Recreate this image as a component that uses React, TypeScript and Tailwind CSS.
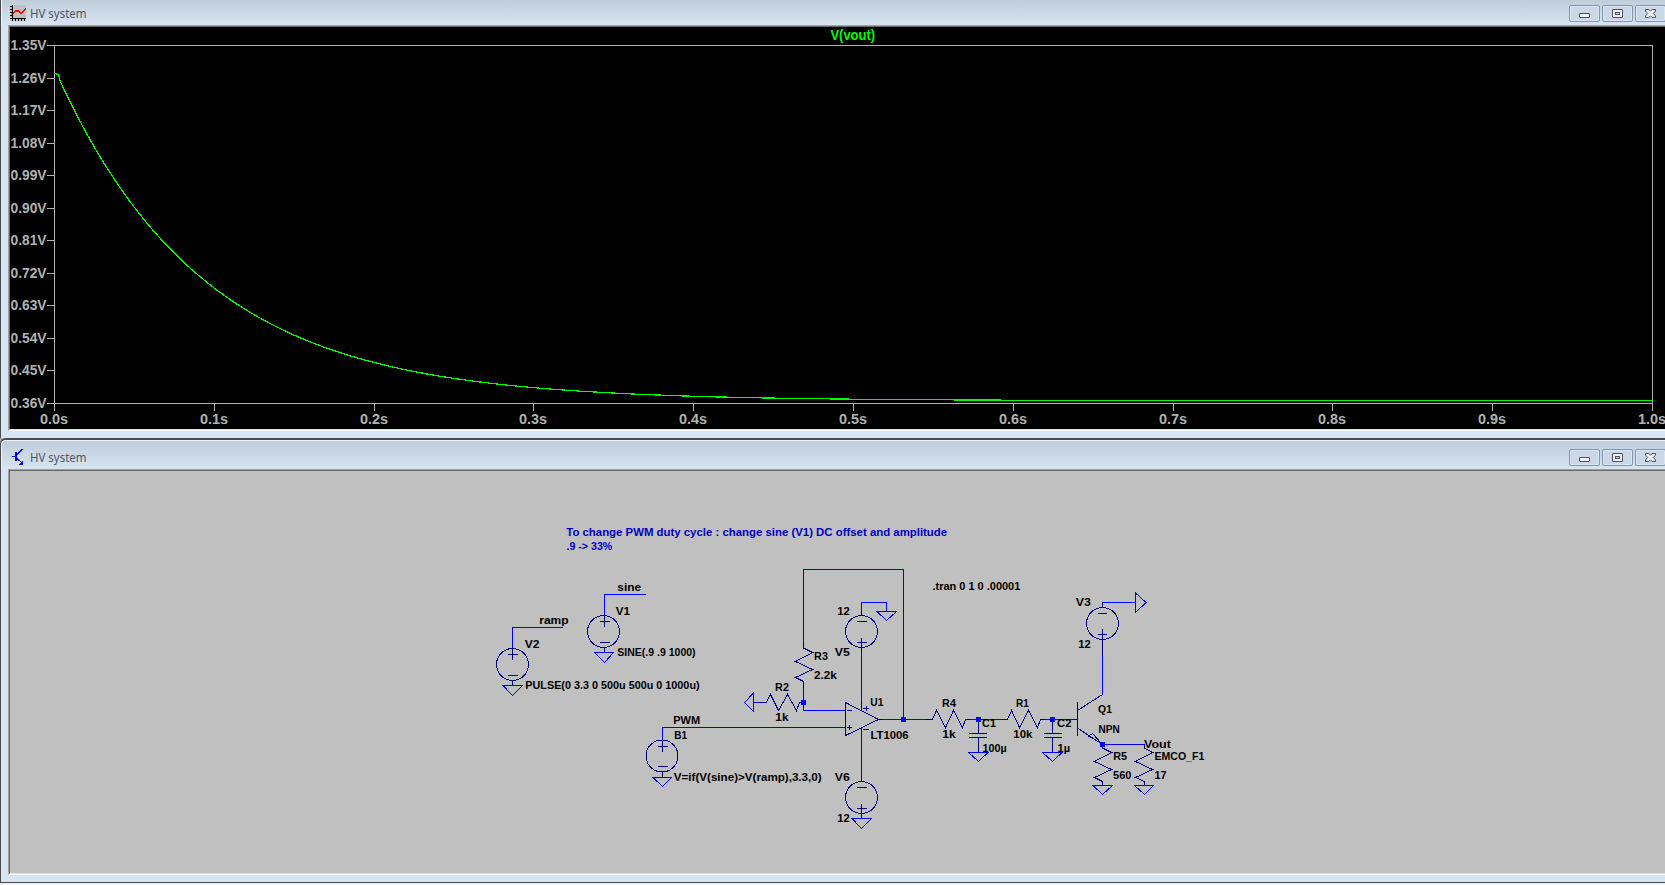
import type { ReactNode } from "react";

const WIRE = "#0000ff";
const PART = "#000080";

function CaptionButtons() {
  const box =
    "flex h-[17px] w-[31px] shrink-0 items-center justify-center rounded-[2px] border border-[#8593b0] bg-[#c9d7e7] shadow-[inset_0_0_0_1px_#dae5f2]";
  return (
    <div className="flex gap-[2px] overflow-hidden pt-[5px]">
      <button className={box} aria-label="Minimize">
        <svg width="31" height="17" viewBox="0 0 31 17" className="shrink-0">
          <rect x="10.5" y="8.5" width="10" height="4" rx="0.5" fill="#f2f2f2" stroke="#4b5066" />
        </svg>
      </button>
      <button className={box} aria-label="Restore">
        <svg width="31" height="17" viewBox="0 0 31 17" className="shrink-0">
          <rect x="10.5" y="4.5" width="10" height="8" rx="0.5" fill="#f2f2f2" stroke="#4b5066" />
          <rect x="13.5" y="7.5" width="4" height="2" fill="#c9d7e7" stroke="#4b5066" />
        </svg>
      </button>
      <button className={box} aria-label="Close">
        <svg width="31" height="17" viewBox="0 0 31 17" className="shrink-0">
          <path
            d="M10.5 4.5h3.4l1.6 1.7 1.6-1.7h3.4v1.6l-2.3 2.4 2.3 2.4v1.6h-3.4l-1.6-1.7-1.6 1.7h-3.4v-1.6l2.3-2.4-2.3-2.4z"
            fill="#f2f2f2"
            stroke="#4b5066"
          />
        </svg>
      </button>
    </div>
  );
}

function PlotIcon() {
  return (
    <svg width="16" height="16" viewBox="0 0 16 16" shapeRendering="crispEdges">
      <rect width="16" height="16" fill="#c0c0c0" />
      <path
        d="M2.5 0V16M0 13.5H16M0 1.5H2M0 4.5H2M0 7.5H2M0 10.5H2M5.5 14V16M8.5 14V16M11.5 14V16M14.5 14V16"
        stroke="#000"
        fill="none"
      />
      <path d="M3 8.5L6 5.5H8L10 7.5H12L16 3.5" stroke="#ff0000" strokeWidth="2" fill="none" />
    </svg>
  );
}

function TransistorIcon() {
  return (
    <svg width="16" height="16" viewBox="-2 0 16 16" shapeRendering="crispEdges">
      <path d="M4 3V12" stroke="#0000ff" strokeWidth="2" />
      <path d="M0 7.5H4M5 5.5L10.5 0M5 9.5L11 15" stroke="#0000ff" fill="none" />
      <path d="M10.5 11.5V15.5H6.5z" fill="#0000ff" />
    </svg>
  );
}

function TitleBar({ icon, title }: { icon: ReactNode; title: string }) {
  return (
    <div className="flex h-[25px] shrink-0 justify-between">
      <div className="flex items-start">
        <div className="pt-[5px] pl-[8px]">{icon}</div>
        <div className="pt-[5px] pl-[4px]">
          <svg width="70" height="18" viewBox="30 0 70 18">
            <text
              x="30"
              y="13"
              fontFamily="'Noto Sans','Open Sans',sans-serif"
              fontSize="12"
              fill="#4c5766"
              textLength="56.5"
              lengthAdjust="spacingAndGlyphs"
            >
              {title}
            </text>
          </svg>
        </div>
      </div>
      <div className="w-[96px] overflow-hidden">
        <CaptionButtons />
      </div>
    </div>
  );
}

const yLabels = ["1.35V", "1.26V", "1.17V", "1.08V", "0.99V", "0.90V", "0.81V", "0.72V", "0.63V", "0.54V", "0.45V", "0.36V"];
const xLabels = ["0.0s", "0.1s", "0.2s", "0.3s", "0.4s", "0.5s", "0.6s", "0.7s", "0.8s", "0.9s", "1.0s"];

const tickY = (i: number) => Math.round(45 + (i * 358) / 11);
const tickX = (i: number) => Math.round(54 + i * 159.8);

// Exponential discharge of V(vout), with the short delay at t = 0
const curve = Array.from({ length: 800 }, (_, i) => {
  const x = 54 + i * 2;
  const y = 400.6 - 332 * Math.exp(-((x - 54) / 1598) / 0.0924);
  return `${x + 0.5},${i < 3 ? 73.5 + i * 0.5 : y.toFixed(1)}`;
}).join(" ");

function Plot() {
  return (
    <svg width="1655" height="402" viewBox="10 27 1655 402" className="block bg-black">
      <g stroke="#b2b2b2" fill="none" shapeRendering="crispEdges">
        <path d="M54.5 45.5H1652.5V403.5H54.5z" />
        {yLabels.map((l, i) => (
          <path key={l} d={`M47 ${tickY(i) + 0.5}H54`} />
        ))}
        {xLabels.map((l, i) => (
          <path key={l} d={`M${tickX(i) + 0.5} 403V411`} />
        ))}
      </g>
      <polyline points={curve} fill="none" stroke="#00ff00" shapeRendering="crispEdges" strokeWidth="1.2" />
      <g fontFamily="'Liberation Sans',Arial,sans-serif" fontWeight="bold" fontSize="14" fill="#b2b2b2">
        {yLabels.map((l, i) => (
          <text key={l} x="10.5" y={tickY(i) + 5} textLength="36" lengthAdjust="spacingAndGlyphs">
            {l}
          </text>
        ))}
        {xLabels.map((l, i) => (
          <text key={l} x={tickX(i) - 14} y="424" textLength="28" lengthAdjust="spacingAndGlyphs">
            {l}
          </text>
        ))}
        <text x="830.5" y="40" fill="#00ff00" textLength="44.5" lengthAdjust="spacingAndGlyphs">
          V(vout)
        </text>
      </g>
    </svg>
  );
}

type Label = [text: string, x: number, baseline: number, width: number];

const labels: Label[] = [
  ["sine", 617.5, 591, 23],
  ["V1", 616, 615, 13.5],
  ["SINE(.9 .9 1000)", 617.5, 656, 77.5],
  ["ramp", 539.5, 624, 28.5],
  ["V2", 525, 648, 14],
  ["PULSE(0 3.3 0 500u 500u 0 1000u)", 525.5, 689, 173.5],
  ["PWM", 673.5, 724, 26],
  ["B1", 674.5, 739, 12],
  ["V=if(V(sine)>V(ramp),3.3,0)", 674, 781, 147],
  ["R2", 775.3, 691, 13],
  ["1k", 775.5, 721, 12.5],
  ["R3", 814.3, 660, 13],
  ["2.2k", 814.3, 679, 22],
  ["U1", 870.5, 706, 12.3],
  ["LT1006", 870.7, 739, 37.3],
  ["V6", 835, 781, 14.3],
  ["12", 837.5, 822, 11.7],
  ["12", 837.5, 615, 11.7],
  ["V5", 835, 656, 14.3],
  [".tran 0 1 0 .00001", 932.7, 590, 87],
  ["R4", 942.3, 707, 13],
  ["1k", 942.5, 738, 12.5],
  ["R1", 1016.3, 707, 12],
  ["10k", 1013.5, 738, 18.3],
  ["C1", 982.3, 727, 13],
  ["100µ", 982.7, 752, 23.5],
  ["C2", 1057.3, 727, 13.5],
  ["1µ", 1057.7, 752, 11.7],
  ["Q1", 1098.3, 713, 13],
  ["NPN", 1098.7, 733, 20.3],
  ["R5", 1113.5, 760, 13],
  ["560", 1113.3, 779, 17.5],
  ["Vout", 1144.3, 748, 26],
  ["EMCO_F1", 1154.7, 760, 49],
  ["17", 1154.7, 779, 11.3],
  ["V3", 1076, 606, 14.3],
  ["12", 1078.5, 648, 11.7],
];

const notes: Label[] = [
  ["To change PWM duty cycle : change sine (V1) DC offset and amplitude", 566.5, 536, 380],
  [".9 -> 33%", 566.7, 550, 45],
];

function Texts({ items, fill }: { items: Label[]; fill: string }) {
  return (
    <g fontFamily="'Liberation Sans',Arial,sans-serif" fontWeight="bold" fontSize="11.5" fill={fill}>
      {items.map(([t, x, y, w], i) => (
        <text key={i} x={x - 0.2} y={y} textLength={w + 0.8} lengthAdjust="spacingAndGlyphs">
          {t}
        </text>
      ))}
    </g>
  );
}

const wires = [
  "M512.5 648V627.5H563",
  "M604.5 615V594.5H646",
  "M662.5 740V727.5H845.5",
  "M861.5 728V776",
  "M861.5 610V602.5H886.5V611.5",
  "M861.5 652V702",
  "M803.5 642V569.5H903.5V719.5",
  "M803.5 688V710.5H845",
  "M753.5 702.5H760",
  "M882 719.5H926",
  "M970 719.5H1002",
  "M1045 719.5H1072",
  "M1102.5 656V694.5",
  "M1102.5 744.5H1144.5",
  "M1102.5 602.5H1135.5",
  "M978.5 720V724M1052.5 720V724",
];

const grounds = [
  "M503 685.5H522.5L512.5 695.5z",
  "M594.5 652.5H613.5L604.5 662.5z",
  "M653 777.5H671.5L662.5 786.5z",
  "M852 818.5H871.5L861.5 828.5z",
  "M877 611.5H896.5L886.5 620.5z",
  "M968.5 752.5H988L978.5 761.5z",
  "M1042.5 752.5H1062L1052.5 761.5z",
  "M1093 785.5H1112.5L1102.5 794.5z",
  "M1134.5 785.5H1153.5L1144.5 794.5z",
  "M753.5 693V711.5L744.5 702.5z",
  "M1135.5 593V612.5L1146 602.5z",
];

const horizontalResistors = [
  "M760 702.5H766L770.5 694.5L778.5 710.5L787.5 694.5L796.5 710.5L799.5 702.5H803",
  "M926 719.5H932.5L936.5 710.5L945.5 727.5L953.5 710.5L962.5 727.5L965.5 719.5H971",
  "M1002 719.5H1007.5L1011.5 710.5L1019.5 727.5L1028.5 710.5L1037.5 727.5L1040.5 719.5H1046",
];

const verticalResistors = [
  "M803.5 642V648L812.5 652.5L795.5 661.5L812.5 669.5L795.5 677.5L803.5 681.5V688",
  "M1102.5 744V748L1111.5 752.5L1094.5 761.5L1111.5 769.5L1094.5 777.5L1102.5 781.5V785",
  "M1144.5 744V748L1152.5 752.5L1135.5 761.5L1152.5 769.5L1135.5 777.5L1144.5 781.5V785",
];

const symbols = [
  // source terminals and polarity marks
  "M507.5 654.5H518M512.5 648V660M508 675.5H518M512.5 681V685",
  "M599.5 621.5H610M604.5 615V627M600 642.5H610M604.5 648V652",
  "M657.5 746.5H668M662.5 739V752M658 766.5H668M662.5 772V777",
  "M857 787.5H867M856.5 808.5H867M861.5 804V818M861.5 776V781",
  "M857 621.5H867M856.5 642.5H867M861.5 638V652M861.5 610V615",
  "M1098 613.5H1107M1098 634.5H1107M1102.5 629V656M1102.5 602V607",
  // op-amp
  "M845.5 702.5L878.5 719.5L845.5 735.5zM878 719.5H882M847 710.5H852M847 727.5H852M849.5 725V730M861.5 702V711M861.5 728V735M863 708.5H869M866.5 706V711M863 729.5H869",
  // capacitors
  "M978.5 724V733M969 733.5H987M969 737.5H987M978.5 738V752",
  "M1052.5 724V733M1043.5 733.5H1062M1043.5 737.5H1062M1052.5 738V752",
  // transistor
  "M1072 719.5H1077M1077.5 702V736M1077.5 710.5L1102.5 694.5M1077.5 728L1102.5 744.5M1101.5 743.5L1092.5 733.5L1088.5 736z",
  ...horizontalResistors,
  ...verticalResistors,
];

const sources = [
  [512.5, 664.5],
  [603.5, 631.5],
  [662, 756],
  [861.5, 797.5],
  [861.5, 631.5],
  [1102.5, 623.5],
];

const nodes = [
  [803, 702],
  [903, 719],
  [978, 719],
  [1052, 719],
  [1102, 744],
];

function Schematic() {
  return (
    <svg width="1655" height="402" viewBox="10 471 1655 402" className="block bg-[#c0c0c0]">
      <g fill="none" shapeRendering="crispEdges">
        <path d={symbols.join("")} stroke={PART} />
        {sources.map(([x, y]) => (
          <circle key={`${x}-${y}`} cx={x} cy={y} r="16" stroke={PART} />
        ))}
        <path d={wires.join("")} stroke={WIRE} />
        <path d={grounds.join("")} stroke={WIRE} />
        {nodes.map(([x, y]) => (
          <rect key={`${x}-${y}`} x={x - 2} y={y - 2} width="5" height="5" fill={WIRE} />
        ))}
      </g>
      <Texts items={labels} fill="#000000" />
      <Texts items={notes} fill="#0000c4" />
    </svg>
  );
}

function ClientArea({ children }: { children: ReactNode }) {
  return (
    <div className="ml-[7px] h-[406px] shrink-0 border-t border-b border-l border-t-[#a0a0a0] border-b-white border-l-[#a0a0a0]">
      <div className="h-[404px] border-t border-b border-l border-t-[#696969] border-b-[#e3e3e3] border-l-[#696969]">
        {children}
      </div>
    </div>
  );
}

export default function App() {
  return (
    <main className="flex h-[885px] w-[1665px] flex-col overflow-hidden bg-[#f0f0f0]">
      <section className="flex h-[438px] shrink-0 flex-col border-l border-[#4a4a4c] bg-[#d7e4f2]">
        <div className="h-[25px] border-l border-[#eef4fa] bg-linear-to-b from-[#bfcddb] to-[#d7e4f2]">
          <TitleBar icon={<PlotIcon />} title="HV system" />
        </div>
        <ClientArea>
          <Plot />
        </ClientArea>
      </section>
      <div className="h-[445px] shrink-0 bg-[#a7a7a7]">
        <section className="flex h-[445px] flex-col rounded-tl-[6px] border-t-2 border-b border-l border-[#4a4a4c] bg-[#d7e4f2]">
          <div className="h-[29px] shrink-0 rounded-tl-[5px] border-t border-l border-[#eef4fa] bg-linear-to-b from-[#bfcddb] to-[#d7e4f2] pt-[3px]">
            <TitleBar icon={<TransistorIcon />} title="HV system" />
          </div>
          <ClientArea>
            <Schematic />
          </ClientArea>
        </section>
      </div>
    </main>
  );
}
